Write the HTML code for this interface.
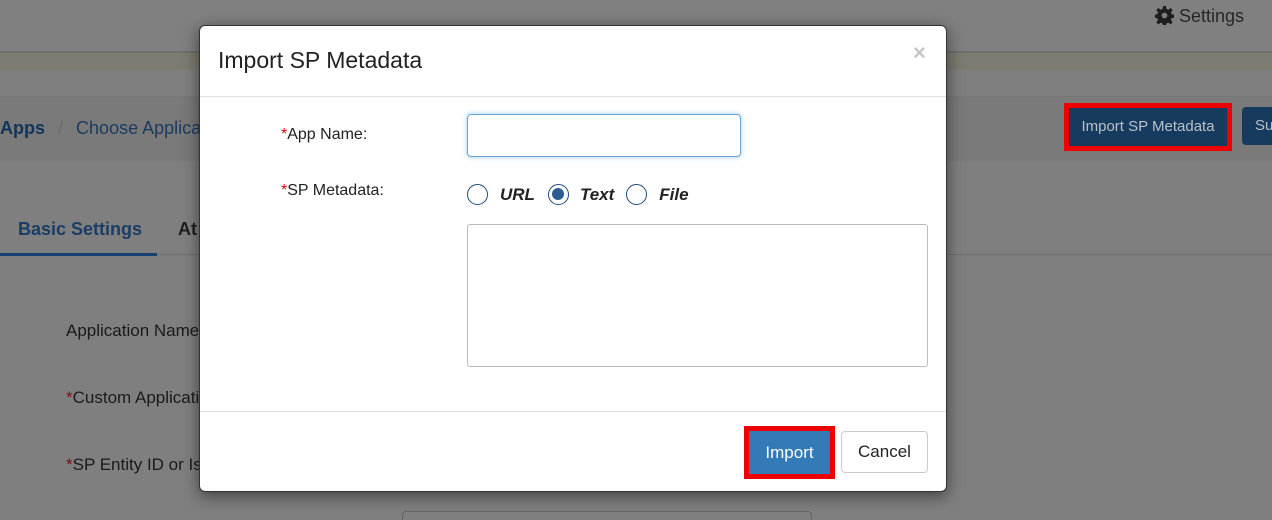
<!DOCTYPE html>
<html style="margin:0;padding:0;width:1272px;height:520px;overflow:hidden;background:#7f7f7f"><head><style>
*{box-sizing:border-box;margin:0;padding:0}
body{width:1272px;height:520px;overflow:hidden;font-family:"Liberation Sans",sans-serif;position:relative}
.abs{position:absolute}
</style></head><body>
<div class="abs" style="left:0;top:0;width:1272px;height:520px;background:#7f7f7f"></div>
<div class="abs" style="left:0;top:0;width:1272px;height:52px;background:#808080"></div>
<div class="abs" style="left:0;top:51px;width:1272px;height:2px;background:#6e6e6e"></div>
<div class="abs" style="left:0;top:53px;width:1272px;height:17px;background:#7e7b70"></div>
<div class="abs" style="left:0;top:96px;width:1272px;height:1px;background:#767676"></div>
<div class="abs" style="left:0;top:97px;width:1272px;height:64px;background:#7a7a7a"></div>
<div class="abs" style="left:1155px;top:6px;font-size:18px;color:#1e1e1e"><svg width="19" height="19" viewBox="0 0 20 20" style="vertical-align:-3px"><path fill="#1e1e1e" d="M8.5 0h3l.5 3 2 .9 2.5-1.8 2.1 2.1-1.8 2.5.9 2 3 .5v3l-3 .5-.9 2 1.8 2.5-2.1 2.1-2.5-1.8-2 .9-.5 3h-3l-.5-3-2-.9-2.5 1.8-2.1-2.1 1.8-2.5-.9-2-3-.5v-3l3-.5.9-2-1.8-2.5 2.1-2.1 2.5 1.8 2-.9z"/><circle cx="10" cy="10" r="3" fill="#808080"/></svg> <span style="color:#262626">Settings</span></div>
<div class="abs" style="left:0;top:118px;font-size:18px;color:#12355a"><b>Apps</b> <span style="color:#6a6a6a;margin:0 8px">/</span> <span style="color:#1b3a5e">Choose Application</span></div>
<div class="abs" style="left:1064px;top:103px;width:168px;height:48px;background:#e00;padding:5px"><div style="background:#163b5e;height:100%;color:#b8c0c8;font-size:15px;text-align:center;line-height:38px">Import SP Metadata</div></div>
<div class="abs" style="left:1242px;top:107px;width:40px;height:38px;background:#163b5e;border-radius:4px;color:#b8c0c8;font-size:15px;line-height:38px;padding-left:13px">Su</div>
<div class="abs" style="left:18px;top:219px;font-size:18px;font-weight:bold;color:#1a3d66">Basic Settings</div>
<div class="abs" style="left:178px;top:219px;font-size:18px;font-weight:bold;color:#1e1e1e">At</div>
<div class="abs" style="left:0;top:253px;width:157px;height:3px;background:#153f70"></div>
<div class="abs" style="left:157px;top:254px;width:1115px;height:1px;background:#6f6f6f"></div>
<div class="abs" style="left:66px;top:321px;font-size:17px;color:#1a1a1a">Application Name</div>
<div class="abs" style="left:66px;top:388px;font-size:17px;color:#1a1a1a"><span style="color:#7a1010">*</span>Custom Application</div>
<div class="abs" style="left:66px;top:455px;font-size:17px;color:#1a1a1a"><span style="color:#7a1010">*</span>SP Entity ID or Issuer</div>
<div class="abs" style="left:402px;top:511px;width:410px;height:9px;border:1px solid #666;border-bottom:none;border-radius:4px 4px 0 0"></div>

<div class="abs" style="left:199px;top:25px;width:748px;height:467px;background:#fff;border:1px solid #333;border-radius:6px;box-shadow:0 4px 16px rgba(0,0,0,.5)">
 <div class="abs" style="left:18px;top:21px;font-size:23px;color:#222">Import SP Metadata</div>
 <div class="abs" style="left:713px;top:14px;font-size:22px;color:#c4c4c4;font-weight:bold">×</div>
 <div class="abs" style="left:0;top:70px;width:746px;height:1px;background:#e0e0e0"></div>
 <div class="abs" style="left:81px;top:100px;font-size:16px;color:#222"><span style="color:#e00">*</span>App Name:</div>
 <div class="abs" style="left:81px;top:156px;font-size:16px;color:#222"><span style="color:#e00">*</span>SP Metadata:</div>
 <div class="abs" style="left:267px;top:88px;width:274px;height:43px;border:1px solid #66a3d9;border-radius:4px;box-shadow:0 0 6px rgba(102,175,233,.6)"></div>
 <div class="abs" style="left:267px;top:158px;font-size:17px;font-style:italic;font-weight:bold;color:#222;display:flex;align-items:center">
  <span style="width:21px;height:21px;border:1.5px solid #1d4a7a;border-radius:50%;display:inline-block;margin-right:12px"></span>URL
  <span style="width:21px;height:21px;border:1.5px solid #1d4a7a;border-radius:50%;display:inline-block;margin:0 11px 0 13px;position:relative"><span style="position:absolute;left:3px;top:3px;width:12px;height:12px;border-radius:50%;background:#2a5d94"></span></span>Text
  <span style="width:21px;height:21px;border:1.5px solid #1d4a7a;border-radius:50%;display:inline-block;margin:0 12px 0 12px"></span>File
 </div>
 <div class="abs" style="left:267px;top:198px;width:461px;height:143px;border:1px solid #bbb;border-radius:3px"></div>
 <div class="abs" style="left:0;top:385px;width:746px;height:1px;background:#e0e0e0"></div>
 <div class="abs" style="left:544px;top:400px;width:91px;height:53px;background:#e00;padding:5px"><div style="background:#337ab7;height:100%;color:#fff;font-size:17px;text-align:center;line-height:43px">Import</div></div>
 <div class="abs" style="left:641px;top:405px;width:87px;height:42px;border:1px solid #ccc;border-radius:4px;font-size:17px;color:#222;text-align:center;line-height:40px">Cancel</div>
</div>
</body></html>
